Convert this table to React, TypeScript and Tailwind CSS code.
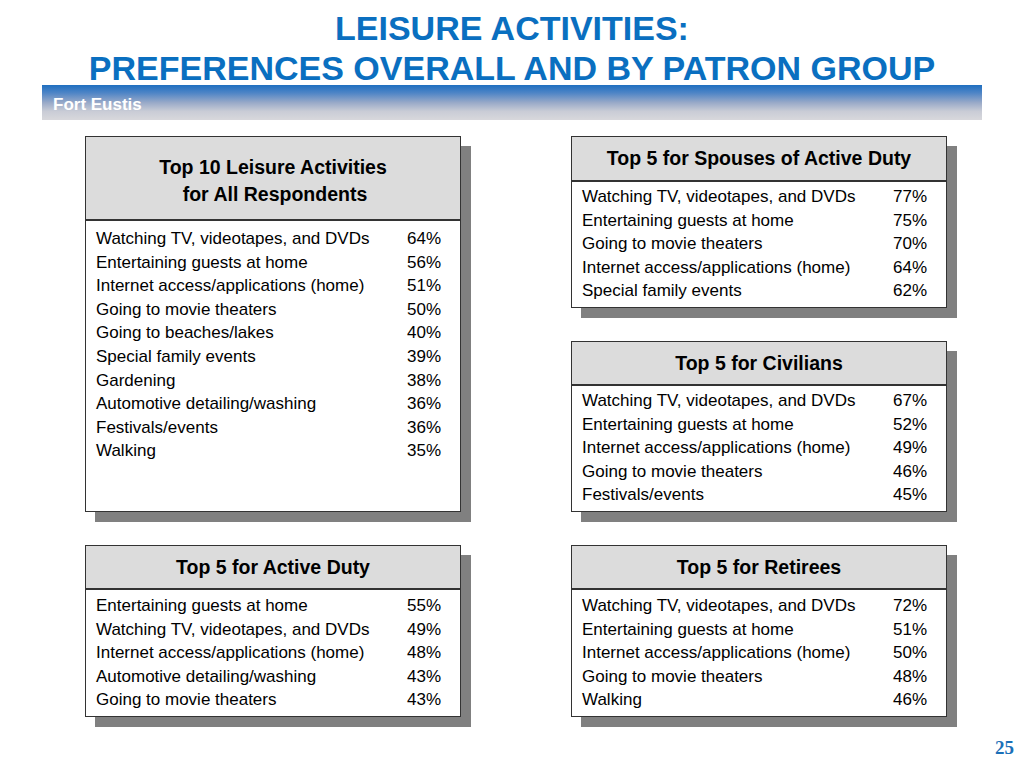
import React from "react";

type Row = [string, string];

function Box({ title, rows, bodyPt, headH, className = "" }: { title: React.ReactNode; rows: Row[]; bodyPt: string; headH: string; className?: string }) {
  return (
    <div className={`bg-white border border-[#333] shadow-[10px_10px_0_#808080] flex flex-col ${className}`}>
      <div className={`${headH} bg-[#dcdcdc] border-b-2 border-[#333] flex items-center justify-center text-center font-bold text-black text-[19.5px] leading-[27px]`}>
        {title}
      </div>
      <div className={`${bodyPt} pl-[10px] pr-[19px] text-[17px] leading-[23.6px] text-black`}>
        {rows.map(([a, b]) => (
          <div key={a} className="flex justify-between">
            <span>{a}</span>
            <span>{b}</span>
          </div>
        ))}
      </div>
    </div>
  );
}

export default function App() {
  const all: Row[] = [
    ["Watching TV, videotapes, and DVDs", "64%"],
    ["Entertaining guests at home", "56%"],
    ["Internet access/applications (home)", "51%"],
    ["Going to movie theaters", "50%"],
    ["Going to beaches/lakes", "40%"],
    ["Special family events", "39%"],
    ["Gardening", "38%"],
    ["Automotive detailing/washing", "36%"],
    ["Festivals/events", "36%"],
    ["Walking", "35%"],
  ];
  const spouses: Row[] = [
    ["Watching TV, videotapes, and DVDs", "77%"],
    ["Entertaining guests at home", "75%"],
    ["Going to movie theaters", "70%"],
    ["Internet access/applications (home)", "64%"],
    ["Special family events", "62%"],
  ];
  const civ: Row[] = [
    ["Watching TV, videotapes, and DVDs", "67%"],
    ["Entertaining guests at home", "52%"],
    ["Internet access/applications (home)", "49%"],
    ["Going to movie theaters", "46%"],
    ["Festivals/events", "45%"],
  ];
  const ad: Row[] = [
    ["Entertaining guests at home", "55%"],
    ["Watching TV, videotapes, and DVDs", "49%"],
    ["Internet access/applications (home)", "48%"],
    ["Automotive detailing/washing", "43%"],
    ["Going to movie theaters", "43%"],
  ];
  const ret: Row[] = [
    ["Watching TV, videotapes, and DVDs", "72%"],
    ["Entertaining guests at home", "51%"],
    ["Internet access/applications (home)", "50%"],
    ["Going to movie theaters", "48%"],
    ["Walking", "46%"],
  ];
  return (
    <div className="w-[1024px] h-[768px] bg-white relative overflow-hidden" style={{ fontFamily: '"Liberation Sans", Arial, sans-serif' }}>
      <div className="pt-[8px] text-center text-[#0a6fc0] font-bold text-[34px] leading-[40px]">
        <div>LEISURE ACTIVITIES:</div>
        <div>PREFERENCES OVERALL AND BY PATRON GROUP</div>
      </div>
      <div className="ml-[42px] w-[940px] h-[35px] mt-[-3px] bg-[linear-gradient(to_bottom,#1f6fc0_0%,#4d84c6_22%,#98a9c8_50%,#c9ccd6_75%,#d8d8dc_100%)] flex items-center pl-[11px] pt-[4px]">
        <span className="text-white font-bold text-[17px]">Fort Eustis</span>
      </div>
      <div className="ml-[85px] mt-[16px] grid grid-cols-[376px_376px] gap-x-[110px] grid-rows-[172px_171px_172px] gap-y-[33px]">
        <Box
          className="row-span-2"
          headH="h-[84px] pt-[6px]"
          bodyPt="pt-[6px]"
          title={<div><div>Top 10 Leisure Activities</div><div className="pl-[4px]">for All Respondents</div></div>}
          rows={all}
        />
        <Box headH="h-[45px]" bodyPt="pt-[3px]" title="Top 5 for Spouses of Active Duty" rows={spouses} />
        <Box headH="h-[44px]" bodyPt="pt-[3px]" title="Top 5 for Civilians" rows={civ} />
        <Box headH="h-[44px]" bodyPt="pt-[4px]" title="Top 5 for Active Duty" rows={ad} />
        <Box headH="h-[44px]" bodyPt="pt-[4px]" title="Top 5 for Retirees" rows={ret} />
      </div>
      <div className="absolute right-[10px] bottom-[6px] text-[#1a70b8] font-bold text-[19px]" style={{ fontFamily: '"Liberation Serif", "Times New Roman", serif' }}>25</div>
    </div>
  );
}
